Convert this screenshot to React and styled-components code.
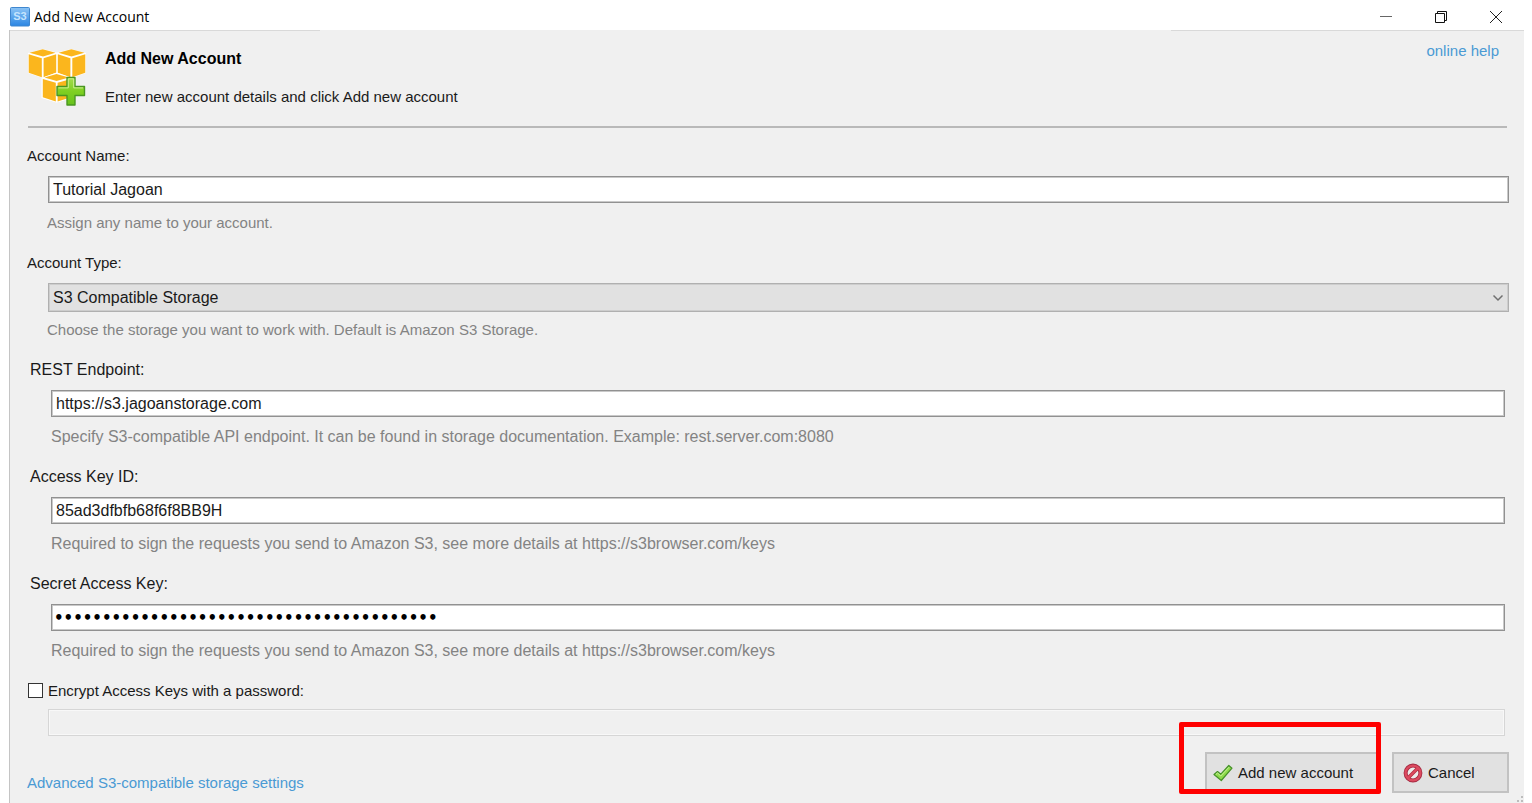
// App.jsx
import React, { useState } from 'react';
import styled, { createGlobalStyle } from 'styled-components';

const GlobalStyle = createGlobalStyle`
  * {
    box-sizing: border-box;
  }

  body {
    margin: 0;
    background: #ffffff;
    color: #1a1a1a;
    font-family: "Liberation Sans", Arial, sans-serif;
    font-size: 15px;
    line-height: 20px;
  }

  input, select, button {
    font: inherit;
    color: inherit;
  }
`;

const Window = styled.div`
  display: flex;
  flex-direction: column;
  min-height: 100vh;
  padding: 0 8px 0 9px;
`;

const TitleBar = styled.header`
  display: flex;
  align-items: center;
  justify-content: space-between;
  height: 30px;
  padding-top: 3px;
`;

const TitleText = styled.div`
  display: flex;
  align-items: center;
  gap: 4px;
  padding-left: 1px;
  font-family: "Open Sans", "Segoe UI", sans-serif;
  font-size: 14px;
  color: #000000;
`;

const WindowButtons = styled.div`
  display: flex;
  margin-right: 1px;
`;

const WindowButton = styled.button`
  display: flex;
  align-items: center;
  justify-content: center;
  width: 55px;
  height: 26px;
  padding: 0;
  border: 0;
  background: transparent;
`;

const Panel = styled.main`
  position: relative;
  flex: 1;
  display: flex;
  flex-direction: column;
  background: #f0f0f0;
  border-left: 1px solid #c4c4c4;
`;

const TopEdge = styled.div`
  display: flex;
  justify-content: space-between;
  height: 2px;
`;

const EdgeLine = styled.span`
  width: ${props => props.$width};
  height: 1px;
  background: #d9d9d9;
`;

const Intro = styled.section`
  display: flex;
  align-items: flex-start;
  gap: 19px;
  height: 96px;
  margin: 0 17px 0 18px;
  padding-top: 16px;
  border-bottom: 2px solid #b9b9b9;
`;

const IntroText = styled.div`
  flex: 1;
  padding-top: 1px;
`;

const Heading = styled.h1`
  margin: 0 0 18px;
  font-size: 16px;
  line-height: 20px;
  color: #000000;
`;

const Text = styled.p`
  margin: 0;
`;

const Link = styled.a`
  color: #4a9ad4;
  text-decoration: none;
`;

const HelpLink = styled(Link)`
  margin: -7px 8px 0 0;
`;

const Form = styled.form`
  display: flex;
  flex-direction: column;
  padding: 18px 15px 10px 17px;
`;

const Field = styled.div`
  display: flex;
  flex-direction: column;
  margin-bottom: 20px;
  padding: ${props => (props.$inset ? '0 4px 0 3px' : '0')};
  font-size: ${props => (props.$inset ? '16px' : '15px')};
`;

const Label = styled.label`
  margin-bottom: 10px;
`;

const Control = styled.div`
  position: relative;
  height: 37px;
  margin-left: 21px;
`;

const TextInput = styled.input`
  display: block;
  width: 100%;
  height: 27px;
  padding: 0 4px;
  border: 1px solid #919191;
  border-radius: 0;
  background: #ffffff;
  box-shadow: inset 0 0 0 1px #c9c9c9;
  font-size: 16px;
  outline: none;

  &[type='password'] {
    padding: 0 2px;
    font-family: "DejaVu Sans", sans-serif;
    font-size: 15px;
    font-weight: bold;
    color: #000000;
  }

  &:disabled {
    border-color: #d6d6d6;
    background: #f0f0f0;
    box-shadow: inset 0 0 0 1px #f8f8f8;
  }
`;

const Select = styled.select`
  display: block;
  width: 100%;
  height: 29px;
  padding: 0 30px 0 4px;
  border: 1px solid #b0b0b0;
  border-radius: 0;
  background: #e1e1e1;
  box-shadow: inset 0 0 0 1px #cdcdcd;
  font-size: 16px;
  appearance: none;
  outline: none;
`;

const SelectArrow = styled.svg`
  position: absolute;
  top: 11px;
  right: 5px;
  pointer-events: none;
`;

const Hint = styled.p`
  margin: 0 0 0 ${props => (props.$inset ? '21px' : '20px')};
  color: #838383;
`;

const CheckRow = styled.div`
  display: flex;
  align-items: center;
  gap: 5px;
  height: 19px;
  padding-left: 1px;
`;

const Checkbox = styled.input`
  width: 15px;
  height: 15px;
  margin: 0;
  border: 1px solid #333333;
  background: #ffffff;
  appearance: none;

  &:checked {
    background: #333333;
    box-shadow: inset 0 0 0 3px #ffffff;
  }
`;

const PasswordRow = styled.div`
  margin: 9px 4px 0 21px;
`;

const Footer = styled.footer`
  display: flex;
  justify-content: space-between;
  align-items: flex-end;
  margin-top: 16px;
`;

const Actions = styled.div`
  display: flex;
  gap: 12px;
`;

const Marked = styled.div`
  position: relative;
`;

const Highlight = styled.span`
  position: absolute;
  top: -30px;
  right: -1px;
  bottom: -1px;
  left: -26px;
  border: 5px solid #ff0000;
  border-radius: 2px;
  pointer-events: none;
`;

const ActionButton = styled.button`
  display: flex;
  align-items: center;
  gap: 5px;
  width: ${props => props.$width};
  height: 41px;
  padding: 0 ${props => props.$pad};
  border: 2px solid #c2c2c2;
  background: #e1e1e1;
`;

const Grip = styled.svg`
  position: absolute;
  right: 0;
  bottom: 0;
`;

const AppIcon = () => (
  <svg width="20" height="20" viewBox="0 0 20 20">
    <defs>
      <linearGradient id="appBlue" x1="0" y1="0" x2="0" y2="1">
        <stop offset="0" stopColor="#8cc4f5" />
        <stop offset="1" stopColor="#2b86e3" />
      </linearGradient>
    </defs>
    <rect x="0.5" y="0.5" width="19" height="18.5" rx="1" fill="url(#appBlue)" stroke="#3f87cf" />
    <text x="10" y="13" textAnchor="middle" fontFamily="Liberation Sans" fontSize="11" fontWeight="bold" fill="#c4e4fd">S3</text>
  </svg>
);

const CubesIcon = () => (
  <svg width="58" height="59" viewBox="0 0 58 59">
    <defs>
      <linearGradient id="plusGreen" x1="0" y1="0" x2="0" y2="1">
        <stop offset="0" stopColor="#a6dc4d" />
        <stop offset="0.5" stopColor="#7fd022" />
        <stop offset="1" stopColor="#67c21d" />
      </linearGradient>
    </defs>
    <path d="M0 5 14.7 1 29 4.6 43.3 1 58 5V25L44 30V50L28.5 54.5 14.5 50V30L0 25Z" fill="#ffffff" />
    <g fill="#fbb61d">
      <path d="M1.5 4.8 14.7 1.3 27.5 4.8 15 8.6Z" />
      <path d="M0.7 6.2 13.8 10.2V29.2L0.7 24.7Z" />
      <path d="M15.6 10.2 28.2 6.2V24.7L15.6 29.2Z" />
      <path d="M30.5 4.8 43.3 1.3 56.5 4.8 43.5 8.6Z" />
      <path d="M29.8 6.2 42.4 10.2V29.2L29.8 24.7Z" />
      <path d="M44.3 10.2 57.3 6.2V24.7L44.3 29.2Z" />
    </g>
    <path d="M13.5 30 28.5 24.6 44 30V50L28.5 54.5 13.5 50Z" fill="#ffffff" />
    <g fill="#fbb61d">
      <path d="M16.5 29.6 28.5 26 41 29.6 28.5 33Z" />
      <path d="M14.8 31 27.8 34.7V53.5L14.8 49.3Z" />
      <path d="M29.6 34.7 43 31V49.3L29.6 53.5Z" />
    </g>
    <path
      d="M39 29.5H47V38.5H56.5V47.5H47V57H39V47.5H29V38.5H39Z"
      fill="url(#plusGreen)"
      stroke="#4a9622"
      strokeWidth="1.4"
      strokeLinejoin="round"
    />
    <path d="M40.3 39.9V30.8H45.7V39.9H55M30.4 39.9H40.3" fill="none" stroke="#cdee8f" />
  </svg>
);

const CheckIcon = () => (
  <svg width="20" height="18" viewBox="0 0 20 18">
    <path d="M1 10.5 4.5 7.5 7.8 10.2 15.8 1.5 19 4.2 8.3 16.5Z" fill="#8edb4b" stroke="#46912a" strokeWidth="1.2" strokeLinejoin="round" />
    <path d="M2.8 10.5 4.5 9 7.8 12 16 3.2" fill="none" stroke="#c9f29a" />
  </svg>
);

const CancelIcon = () => (
  <svg width="20" height="20" viewBox="0 0 20 20">
    <circle cx="10" cy="10" r="7.4" fill="#eceaea" stroke="#a52b42" strokeWidth="4" />
    <path d="M5 15 15 5" stroke="#b3283c" strokeWidth="3.4" />
    <circle cx="10" cy="10" r="7.4" fill="none" stroke="#dc4a5f" strokeWidth="2.4" />
    <path d="M5 15 15 5" stroke="#dc4a5f" strokeWidth="2" />
  </svg>
);

const App = () => {
  const [name, setName] = useState('Tutorial Jagoan');
  const [endpoint, setEndpoint] = useState('https://s3.jagoanstorage.com');
  const [accessKey, setAccessKey] = useState('85ad3dfbfb68f6f8BB9H');
  const [secretKey, setSecretKey] = useState('x'.repeat(40));
  const [encrypt, setEncrypt] = useState(false);

  return (
    <Window>
      <GlobalStyle />
      <TitleBar>
        <TitleText>
          <AppIcon />
          Add New Account
        </TitleText>
        <WindowButtons>
          <WindowButton type="button" aria-label="Minimize">
            <svg width="12" height="12" viewBox="0 0 12 12">
              <path d="M0 5.5H12" stroke="#666666" />
            </svg>
          </WindowButton>
          <WindowButton type="button" aria-label="Restore">
            <svg width="12" height="12" viewBox="0 0 12 12" fill="none" stroke="#111111">
              <path d="M0.5 2.5H9.5V11.5H0.5Z" />
              <path d="M2.5 2.5V0.5H11.5V9.5H9.5" />
            </svg>
          </WindowButton>
          <WindowButton type="button" aria-label="Close">
            <svg width="12" height="12" viewBox="0 0 12 12">
              <path d="M0 0 12 12M12 0 0 12" stroke="#222222" />
            </svg>
          </WindowButton>
        </WindowButtons>
      </TitleBar>

      <Panel>
        <TopEdge>
          <EdgeLine $width="310px" />
          <EdgeLine $width="353px" />
        </TopEdge>
        <Intro>
          <CubesIcon />
          <IntroText>
            <Heading>Add New Account</Heading>
            <Text>Enter new account details and click Add new account</Text>
          </IntroText>
          <HelpLink href="#help">online help</HelpLink>
        </Intro>

        <Form onSubmit={e => e.preventDefault()}>
          <Field>
            <Label htmlFor="name">Account Name:</Label>
            <Control>
              <TextInput id="name" value={name} onChange={e => setName(e.target.value)} />
            </Control>
            <Hint>Assign any name to your account.</Hint>
          </Field>

          <Field>
            <Label htmlFor="type">Account Type:</Label>
            <Control>
              <Select id="type" defaultValue="compatible">
                <option value="compatible">S3 Compatible Storage</option>
                <option value="amazon">Amazon S3 Storage</option>
              </Select>
              <SelectArrow width="12" height="8" viewBox="0 0 12 8">
                <path d="M1.5 1.5 6 6 10.5 1.5" fill="none" stroke="#707070" strokeWidth="1.5" />
              </SelectArrow>
            </Control>
            <Hint>Choose the storage you want to work with. Default is Amazon S3 Storage.</Hint>
          </Field>

          <Field $inset>
            <Label htmlFor="endpoint">REST Endpoint:</Label>
            <Control>
              <TextInput id="endpoint" value={endpoint} onChange={e => setEndpoint(e.target.value)} />
            </Control>
            <Hint $inset>Specify S3-compatible API endpoint. It can be found in storage documentation. Example: rest.server.com:8080</Hint>
          </Field>

          <Field $inset>
            <Label htmlFor="accessKey">Access Key ID:</Label>
            <Control>
              <TextInput id="accessKey" value={accessKey} onChange={e => setAccessKey(e.target.value)} />
            </Control>
            <Hint $inset>Required to sign the requests you send to Amazon S3, see more details at https://s3browser.com/keys</Hint>
          </Field>

          <Field $inset>
            <Label htmlFor="secretKey">Secret Access Key:</Label>
            <Control>
              <TextInput id="secretKey" type="password" value={secretKey} onChange={e => setSecretKey(e.target.value)} />
            </Control>
            <Hint $inset>Required to sign the requests you send to Amazon S3, see more details at https://s3browser.com/keys</Hint>
          </Field>

          <CheckRow>
            <Checkbox id="encrypt" type="checkbox" checked={encrypt} onChange={e => setEncrypt(e.target.checked)} />
            <label htmlFor="encrypt">Encrypt Access Keys with a password:</label>
          </CheckRow>
          <PasswordRow>
            <TextInput type="password" aria-label="Encryption password" disabled={!encrypt} />
          </PasswordRow>

          <Footer>
            <Link href="#advanced">Advanced S3-compatible storage settings</Link>
            <Actions>
              <Marked>
                <ActionButton type="submit" $width="175px" $pad="6px">
                  <CheckIcon />
                  Add new account
                </ActionButton>
                <Highlight />
              </Marked>
              <ActionButton type="button" $width="117px" $pad="9px">
                <CancelIcon />
                Cancel
              </ActionButton>
            </Actions>
          </Footer>
        </Form>
        <Grip width="8" height="8" viewBox="0 0 8 8" fill="#bdbdbd">
          <path d="M5 1H7V3H5ZM5 5H7V7H5ZM1 5H3V7H1Z" />
        </Grip>
      </Panel>
    </Window>
  );
};

export default App;
